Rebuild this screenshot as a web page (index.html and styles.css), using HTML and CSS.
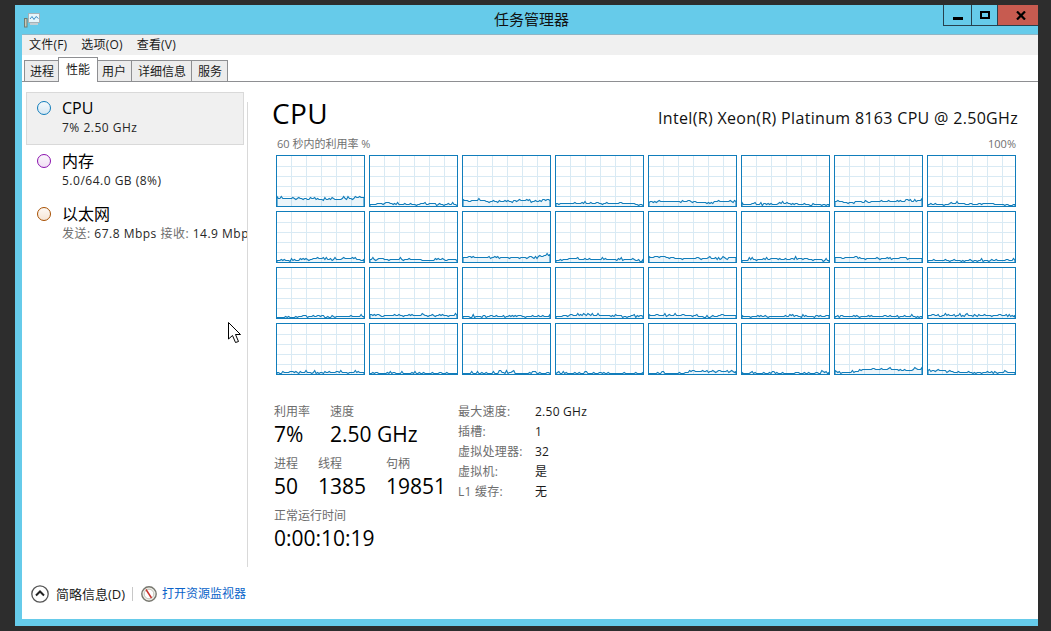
FILE: index.html
```html
<!DOCTYPE html>
<html lang="zh">
<head>
    <meta charset="UTF-8">
    <meta name="viewport" content="width=device-width, initial-scale=1.0">
    <title>任务管理器</title>
    <link rel="stylesheet" href="styles.css">
</head>
<body>

    <div class="window">

        <!-- Title bar -->
        <div class="titlebar">
            <svg class="app-icon" width="17" height="15" viewBox="0 0 17 15">
                <rect x="0.5" y="5.5" width="2.5" height="8.5" fill="#c9c9b8" stroke="#6f7d74"/>
                <rect x="4.5" y="0.5" width="11" height="9" fill="#e6f6fc" stroke="#a4b2b8"/>
                <polyline points="6,6 8,3.5 10,6.5 12,3.5 14.5,5.5" fill="none" stroke="#3b8fc7"/>
                <rect x="6" y="10" width="8" height="2" fill="#c3ced3"/>
            </svg>
            <div class="title">任务管理器</div>
            <div class="window-buttons">
                <div class="win-btn btn-min"><span class="min-glyph"></span></div>
                <div class="win-btn btn-max"><span class="max-glyph"></span></div>
                <div class="win-btn btn-close">
                    <svg width="10" height="9" viewBox="0 0 10 9">
                        <path d="M1 0.5 L9 8.5 M9 0.5 L1 8.5" stroke="#000" stroke-width="2.2"/>
                    </svg>
                </div>
            </div>
        </div>

        <div class="client">

            <!-- Menu -->
            <div class="menubar">
                <span>文件(F)</span>
                <span>选项(O)</span>
                <span>查看(V)</span>
            </div>

            <!-- Tabs -->
            <div class="tabs">
                <div class="tab tab-first">进程</div>
                <div class="tab tab-active">性能</div>
                <div class="tab tab-narrow">用户</div>
                <div class="tab">详细信息</div>
                <div class="tab">服务</div>
            </div>

            <div class="content">

                <!-- Sidebar -->
                <div class="sidebar">
                    <div class="side-item selected">
                        <span class="dot dot-cpu"></span>
                        <div class="side-text">
                            <div class="side-title">CPU</div>
                            <div class="side-sub">7% 2.50 GHz</div>
                        </div>
                    </div>
                    <div class="side-item">
                        <span class="dot dot-mem"></span>
                        <div class="side-text">
                            <div class="side-title">内存</div>
                            <div class="side-sub">5.0/64.0 GB (8%)</div>
                        </div>
                    </div>
                    <div class="side-item">
                        <span class="dot dot-net"></span>
                        <div class="side-text">
                            <div class="side-title">以太网</div>
                            <div class="side-sub"><span class="muted">发送:</span> 67.8 Mbps <span class="muted">接收:</span> 14.9 Mbps</div>
                        </div>
                    </div>
                </div>

                <!-- Performance pane -->
                <div class="pane">
                    <div class="pane-head">
                        <div class="pane-title">CPU</div>
                        <div class="pane-model">Intel(R) Xeon(R) Platinum 8163 CPU @ 2.50GHz</div>
                    </div>
                    <div class="graph-caption">
                        <span>60 秒内的利用率 %</span>
                        <span>100%</span>
                    </div>
                    <div class="graphs" id="graphs"></div>

                    <div class="stats">
                        <div class="stats-left">
                            <div class="stat-row">
                                <div class="stat stat-usage">
                                    <div class="stat-label">利用率</div>
                                    <div class="stat-value">7%</div>
                                </div>
                                <div class="stat">
                                    <div class="stat-label">速度</div>
                                    <div class="stat-value">2.50 GHz</div>
                                </div>
                            </div>
                            <div class="stat-row">
                                <div class="stat stat-proc">
                                    <div class="stat-label">进程</div>
                                    <div class="stat-value">50</div>
                                </div>
                                <div class="stat stat-thread">
                                    <div class="stat-label">线程</div>
                                    <div class="stat-value">1385</div>
                                </div>
                                <div class="stat">
                                    <div class="stat-label">句柄</div>
                                    <div class="stat-value">19851</div>
                                </div>
                            </div>
                            <div class="stat-row">
                                <div class="stat">
                                    <div class="stat-label">正常运行时间</div>
                                    <div class="stat-value">0:00:10:19</div>
                                </div>
                            </div>
                        </div>
                        <div class="stats-right">
                            <span class="muted">最大速度:</span><span>2.50 GHz</span>
                            <span class="muted">插槽:</span><span>1</span>
                            <span class="muted">虚拟处理器:</span><span>32</span>
                            <span class="muted">虚拟机:</span><span>是</span>
                            <span class="muted">L1 缓存:</span><span>无</span>
                        </div>
                    </div>
                </div>
            </div>

            <!-- Footer -->
            <div class="footer">
                <svg class="footer-icon" width="18" height="18" viewBox="0 0 18 18">
                    <circle cx="9" cy="9" r="8.2" fill="#fff" stroke="#555" stroke-width="1.3"/>
                    <polyline points="5,10.5 9,6.5 13,10.5" fill="none" stroke="#222" stroke-width="2"/>
                </svg>
                <span class="footer-text">简略信息(D)</span>
                <span class="footer-sep"></span>
                <svg class="footer-icon" width="16" height="16" viewBox="0 0 16 16">
                    <circle cx="8" cy="8" r="7.2" fill="#eeeee6" stroke="#77776f" stroke-width="1.4"/>
                    <circle cx="8" cy="8" r="4.8" fill="#fff" stroke="#c4c4bc"/>
                    <line x1="5" y1="3.5" x2="10.5" y2="12" stroke="#c8322b" stroke-width="1.5"/>
                </svg>
                <span class="footer-link">打开资源监视器</span>
            </div>
        </div>
    </div>

    <!-- Mouse pointer -->
    <svg class="pointer" width="14" height="23" viewBox="0 0 14 23">
        <path d="M0.5 0.5 L0.5 17 L4.5 13.5 L7.5 20.5 L10.5 19.5 L7.5 12.5 L12.5 12.5 Z" fill="#fff" stroke="#000"/>
    </svg>

    <script src="script.js"></script>
</body>
</html>
```

FILE: styles.css
```css
/* Page */
body {
    margin: 0;
    height: 631px;
    overflow: hidden;
    background-color: #2d2d2d;
    font-family: 'Open Sans', 'Noto Sans CJK SC', sans-serif;
    font-size: 12px;
    color: #000;
}

.window {
    margin: 5px 0 0 15px;
    width: 1023px;
    height: 621px;
    background-color: #66cbea;
    display: flex;
    flex-direction: column;
}

/* Title bar */
.titlebar {
    height: 29px;
    flex-shrink: 0;
    position: relative;
    display: flex;
    justify-content: center;
    padding-left: 10px;
}

.app-icon {
    position: absolute;
    left: 9px;
    top: 8px;
}

.title {
    font-size: 15px;
    line-height: 29px;
    color: #111;
}

.window-buttons {
    position: absolute;
    top: 0;
    right: 0;
    display: flex;
    height: 20px;
}

.win-btn {
    display: flex;
    justify-content: center;
    align-items: center;
    box-sizing: border-box;
    height: 21px;
    border-bottom: 1px solid #26414f;
    border-left: 1px solid #26414f;
}

.btn-min { width: 28px; }
.btn-max { width: 26px; }

.btn-close {
    width: 41px;
    padding-left: 6px;
    background-color: #c75b50;
}

.min-glyph {
    width: 10px;
    height: 3px;
    background-color: #000;
    margin-top: 6px;
}

.max-glyph {
    box-sizing: border-box;
    width: 10px;
    height: 8px;
    border: 2px solid #000;
}

/* Client area */
.client {
    margin-left: 7px;
    height: 584px;
    background-color: #fff;
    border-top: 1px solid #8fb6c6;
    display: flex;
    flex-direction: column;
}

.menubar {
    height: 20px;
    flex-shrink: 0;
    background-color: #f0f0f0;
    display: flex;
    gap: 14px;
    padding-left: 7px;
    line-height: 20px;
    letter-spacing: 0.2px;
    color: #1a1a1a;
}

/* Tabs */
.tabs {
    height: 26px;
    flex-shrink: 0;
    display: flex;
    align-items: flex-end;
    padding-left: 2px;
    border-bottom: 1px solid #8e8f92;
}

.tab {
    box-sizing: border-box;
    height: 21px;
    line-height: 22px;
    padding: 0 5px 0 6px;
    white-space: nowrap;
    background-color: #ececec;
    border: 1px solid #8e8f92;
    border-left: 0;
    border-bottom: 0;
    color: #1a1a1a;
}

.tab-first {
    border-left: 1px solid #8e8f92;
    padding: 0 5px;
    width: 35px;
}

.tab-narrow {
    padding: 0 5px 0 4px;
}

.tab-active {
    height: 25px;
    margin-bottom: -1px;
    line-height: 24px;
    padding: 0 7px;
    width: 40px;
    background-color: #fff;
    border-left: 1px solid #8e8f92;
    margin-left: -1px;
    position: relative;
}

.content {
    flex: 1;
    display: flex;
    min-height: 0;
}

/* Sidebar */
.sidebar {
    width: 225px;
    flex-shrink: 0;
    box-sizing: border-box;
    padding: 10px 3px 0 4px;
    overflow: hidden;
}

.side-item {
    box-sizing: border-box;
    height: 53px;
    display: flex;
    padding: 8px 0 0 10px;
    border: 1px solid transparent;
    white-space: nowrap;
}

.side-item.selected {
    background-color: #f0f0f0;
    border-color: #d9d9d9;
}

.dot {
    box-sizing: border-box;
    width: 14px;
    height: 14px;
    border-radius: 50%;
    border: 1px solid;
    flex-shrink: 0;
}

.dot-cpu {
    border-color: #117dbb;
    background: linear-gradient(#f4f9fc, #d5e7f3);
}

.dot-mem {
    border-color: #8b12ae;
    background: linear-gradient(#fbf6fc, #f0e0f4);
}

.dot-net {
    border-color: #a74f01;
    background: linear-gradient(#fdf9f5, #f6e5d5);
}

.side-text {
    margin-left: 11px;
    margin-top: -3px;
}

.side-title {
    font-size: 16px;
    line-height: 20px;
}

.side-sub {
    font-size: 12px;
    line-height: 16px;
    margin-top: 2px;
    letter-spacing: 0.5px;
    color: #262626;
}

.muted {
    color: #6d6d6d;
}

/* Performance pane */
.pane {
    flex: 1;
    margin-top: 20px;
    border-left: 1px solid #d9d9d9;
    min-width: 0;
}

.pane-head {
    height: 34px;
    display: flex;
    justify-content: space-between;
    align-items: baseline;
    padding: 0 20px 0 24px;
}

.pane-title {
    font-size: 28px;
    letter-spacing: 0.4px;
    line-height: 22px;
}

.pane-model {
    font-size: 16px;
    line-height: 22px;
    letter-spacing: 0.32px;
    color: #111;
}

.graph-caption {
    height: 19px;
    display: flex;
    justify-content: space-between;
    padding: 0 22px 0 29px;
    font-size: 11px;
    line-height: 15px;
    color: #707070;
}

.graphs {
    display: grid;
    grid-template-columns: repeat(8, 89px);
    grid-auto-rows: 52px;
    gap: 4px;
    margin-left: 28px;
}

.graph {
    display: block;
    box-sizing: border-box;
    width: 89px;
    height: 52px;
    border: 1px solid #117dbb;
    background-color: #fff;
}

.grid-line {
    stroke: #d9eaf4;
    stroke-width: 1;
}

.trace {
    fill: #117dbb;
    fill-opacity: 0.08;
    stroke: #117dbb;
    stroke-width: 1.1;
}

/* Stats */
.stats {
    display: flex;
    margin: 29px 0 0 26px;
}

.stats-left {
    width: 184px;
    flex-shrink: 0;
}

.stat-row {
    display: flex;
    height: 52px;
}

.stat {
    white-space: nowrap;
}

.stat-usage { width: 56px; }
.stat-proc { width: 44px; }
.stat-thread { width: 68px; }

.stat-label {
    font-size: 12px;
    line-height: 16px;
    color: #6d6d6d;
}

.stat-value {
    font-size: 21px;
    line-height: 28px;
    color: #000;
}

.stats-right {
    display: grid;
    grid-template-columns: 77px auto;
    grid-auto-rows: 20px;
    align-items: center;
    align-self: flex-start;
    justify-content: start;
    margin-top: -3px;
    letter-spacing: 0.25px;
    color: #1a1a1a;
}

/* Footer */
.footer {
    height: 52px;
    flex-shrink: 0;
    display: flex;
    align-items: center;
    padding-left: 9px;
}

.footer-icon {
    margin-top: 2px;
}

.footer-text {
    font-size: 13px;
    margin-left: 7px;
    color: #1a1a1a;
}

.footer-sep {
    width: 1px;
    height: 14px;
    background-color: #c8c8c8;
    margin: 2px 8px 0 7px;
}

.footer-link {
    margin-left: 5px;
    color: #0a63c9;
}

/* Mouse pointer */
.pointer {
    position: absolute;
    left: 228px;
    top: 322px;
}
```

FILE: script.js
```js
// Keypoints are the height of the trace above the graph floor, in px
var cores = [
    [8, 8, 8, 7, 7, 8, 9], [2, 3, 2, 2, 3, 2, 2], [6, 6, 5, 5, 6, 5, 6], [3, 3, 3, 3, 3, 3, 2],
    [5, 5, 5, 5, 4, 5, 5], [2, 2, 2, 3, 2, 2, 2], [5, 4, 5, 5, 5, 5, 6], [2, 2, 3, 2, 3, 2, 2],

    [2, 2, 3, 4, 3, 4, 3], [3, 3, 3, 3, 2, 3, 3], [5, 5, 5, 5, 5, 5, 7], [2, 4, 3, 3, 3, 3, 1],
    [5, 6, 4, 4, 4, 4, 5], [2, 3, 4, 3, 4, 3, 2], [5, 5, 4, 4, 4, 4, 4], [2, 2, 2, 2, 2, 2, 2],

    [0, 1, 2, 2, 2, 2, 2], [4, 3, 3, 3, 3, 3, 3], [2, 2, 2, 2, 2, 2, 2], [2, 3, 3, 3, 3, 2, 2],
    [3, 3, 3, 3, 1, 3, 3], [2, 2, 2, 2, 2, 2, 2], [2, 2, 2, 2, 2, 2, 2], [3, 3, 3, 3, 3, 3, 3],

    [2, 2, 2, 2, 2, 2, 2], [1, 1, 1, 1, 1, 1, 1], [1, 1, 1, 2, 1, 1, 1], [1, 1, 1, 1, 1, 1, 1],
    [1, 1, 1, 3, 3, 3, 3], [1, 1, 1, 1, 1, 1, 2], [2, 2, 5, 5, 5, 4, 5], [4, 4, 2, 2, 2, 2, 2]
];

var seed = 7;

// Small repeatable random so the picture is the same on every load
function rand() {
    seed = (seed * 1103 + 12345) % 65536;
    return seed / 65536;
}

function makeGraph(keys) {
    var lines = '';
    var points = [];
    var i;

    for (i = 1; i <= 5; i++) {
        var gx = i * 15 - 0.5;
        lines += '<line class="grid-line" x1="' + gx + '" y1="0" x2="' + gx + '" y2="50"/>';
    }
    for (i = 1; i <= 4; i++) {
        var gy = i * 10 + 0.5;
        lines += '<line class="grid-line" x1="0" y1="' + gy + '" x2="87" y2="' + gy + '"/>';
    }

    for (i = 0; i <= 60; i++) {
        var pos = i / 60 * (keys.length - 1);
        var low = Math.floor(pos);
        var high = Math.min(low + 1, keys.length - 1);
        var level = Math.round(keys[low] + (keys[high] - keys[low]) * (pos - low));
        var wobble = rand() < 0.5 ? Math.round((rand() - 0.4) * 3) : 0;
        var y = 50.5 - Math.max(level + wobble, 1);
        points.push((i * 87 / 60).toFixed(1) + ',' + y.toFixed(1));
    }

    return '<svg class="graph" viewBox="0 0 87 50">' + lines +
        '<polygon class="trace" points="0,51 ' + points.join(' ') + ' 87,51"/></svg>';
}

var html = '';
cores.forEach(function (keys) {
    html += makeGraph(keys);
});
document.getElementById('graphs').innerHTML = html;
```
